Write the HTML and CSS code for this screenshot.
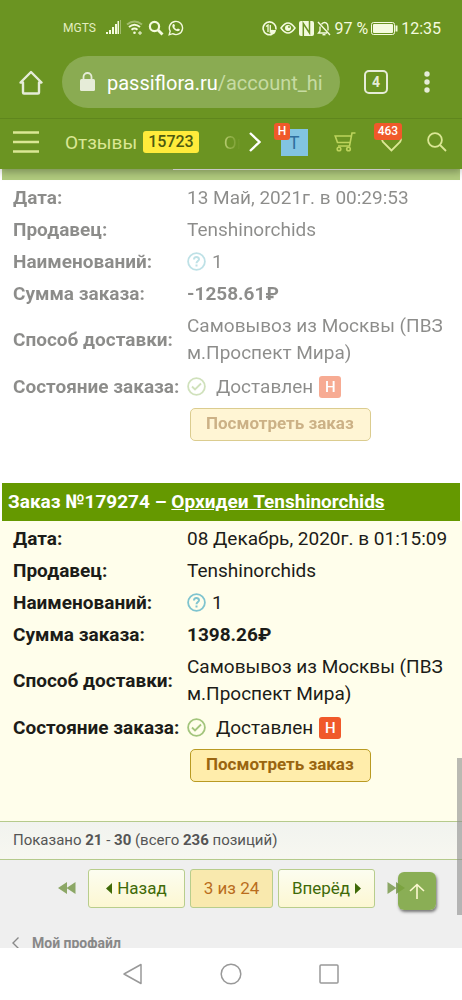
FILE: index.html
```html
<!DOCTYPE html>
<html lang="ru">
<head>
<meta charset="utf-8">
<meta name="viewport" content="width=device-width, initial-scale=1">
<title>История заказов</title>
<link rel="stylesheet" href="styles.css">
</head>
<body>
<div class="screen">
  <header class="chrome">
    <div class="status">
      <div class="status-group">
        <span class="carrier">MGTS</span>
        <svg width="16" height="16" viewBox="0 0 16 16" fill="currentColor"><path d="M0 12h2v2H0zM3 10h2v4H3zM6 7h2v7H6zM9 4h2v10H9zM11.500 1h1.500v13h-1.500z"/><path d="M14 0h1v14h-1z" opacity=".4"/></svg>
        <svg width="18" height="16" viewBox="0 0 18 16" fill="none" stroke="currentColor" stroke-width="2"><path d="M1 4.500Q8.500-1.500 16 4.500" opacity=".4"/><path d="M3 7Q8.500 2.500 14 7M5.500 9.700Q8.500 7.300 11.500 9.700"/><circle cx="8.500" cy="12.700" r="1.300" fill="currentColor" stroke="none"/><path d="M12 13h4M14 11v4" stroke-width="1"/></svg>
        <svg width="16" height="16" viewBox="0 0 16 16" fill="none" stroke="currentColor" stroke-width="2.200"><circle cx="6.500" cy="6.500" r="4.600"/><path d="M10 10l4.500 4.500" stroke-width="2.800"/></svg>
        <svg width="16" height="16" viewBox="0 0 16 16" fill="none" stroke="currentColor" stroke-width="1.400"><path d="M1.200 14.800l1-3.600a6.600 6.600 0 1 1 2.500 2.500z"/><path d="M5 4.300c1.300-.8 1.600.6 2 1.600l-.7 1.100c.6 1.200 1.400 1.900 2.600 2.300l1-.9 1.900.9c.3 1.500-1.600 2.300-3 1.800C6.200 10 4.700 8.300 4.300 6.200c0-.8.200-1.400.7-1.900z" fill="currentColor" stroke="none"/></svg>
      </div>
      <div class="status-group">
        <svg width="15" height="15" viewBox="0 0 15 15" fill="none" stroke="currentColor" stroke-width="1.600"><path d="M10 13.200A6.400 6.400 0 1 1 13.800 8.500"/><path d="M4 5.500L6 4v7M8.300 4v7l2.200-2" stroke-width="1.300"/><path d="M8.500 14.500V9H14q0 4-5.500 5.500z" fill="currentColor" stroke="none"/></svg>
        <svg width="16" height="14" viewBox="0 0 16 14" fill="none" stroke="currentColor" stroke-width="1.500"><path d="M1 7Q8-3 15 7Q8 17 1 7z"/><circle cx="8" cy="7" r="3" fill="currentColor" stroke="none"/><circle cx="9" cy="6" r=".9" fill="#6b9422" stroke="none"/></svg>
        <svg width="15" height="15" viewBox="0 0 15 15"><path d="M2 0h11a2 2 0 0 1 2 2v11a2 2 0 0 1-2 2H2a2 2 0 0 1-2-2V2a2 2 0 0 1 2-2z" fill="currentColor"/><path d="M4.300 15V2.500l6.200 9.500V0" fill="none" stroke="#6b9422" stroke-width="1.500"/></svg>
        <svg width="14" height="15" viewBox="0 0 14 15" fill="none" stroke="currentColor" stroke-width="1.400"><path d="M1 1l12 13M4.500 3.200C8-.5 11 2.500 11 6v3.500M3 5.500V10L1.500 12H10"/><path d="M5.500 13.700h3"/></svg>
        <span>97 %</span>
        <svg width="27" height="13" viewBox="0 0 27 13" fill="none" stroke="currentColor"><rect x=".5" y=".5" width="23" height="12" rx="2"/><rect x="2" y="2" width="20" height="9" rx="1" fill="currentColor" stroke="none"/><path d="M25.500 3.500v6" stroke-width="2"/></svg>
        <time>12:35</time>
      </div>
    </div>
    <div class="browser-bar">
      <button class="icon-btn home" aria-label="Домой"><svg width="24" height="25" viewBox="0 0 24 25" fill="none" stroke="currentColor" stroke-width="2.400" stroke-linejoin="round" stroke-linecap="round"><path d="M1.500 12.500L12 2l10.500 10.500H20V22.500a1 1 0 0 1-1 1H5a1 1 0 0 1-1-1V12.500z"/></svg></button>
      <div class="url">
        <svg width="15" height="20" viewBox="0 0 15 20"><rect x="0" y="7" width="15" height="12" rx="1.500" fill="currentColor"/><path d="M3.500 8V5a4 4 0 0 1 8 0v3" fill="none" stroke="currentColor" stroke-width="1.800"/></svg>
        <span class="url-text">passiflora.ru<span class="url-path">/account_hi</span></span>
      </div>
      <button class="tabs" aria-label="Вкладки">4</button>
      <button class="icon-btn" aria-label="Меню"><svg width="6" height="22" viewBox="0 0 6 22" fill="currentColor"><circle cx="3" cy="3" r="2.700"/><circle cx="3" cy="11" r="2.700"/><circle cx="3" cy="19" r="2.700"/></svg></button>
    </div>
    <nav class="site-nav">
      <button class="icon-btn" aria-label="Меню сайта"><svg width="26" height="22" viewBox="0 0 26 22" stroke="currentColor" stroke-width="2.500"><path d="M0 1.500h26M0 11h26M0 20.500h26"/></svg></button>
      <a class="reviews" href="#">Отзывы <span class="count">15723</span></a>
      <a class="cut" href="#">Оп</a>
      <button class="icon-btn next" aria-label="Дальше"><svg width="12" height="20" viewBox="0 0 12 20" fill="none" stroke="currentColor" stroke-width="2.400"><path d="M1 1l9.500 9L1 19"/></svg></button>
      <a class="avatar" href="#">T<span class="badge">Н</span></a>
      <a class="cart" href="#" aria-label="Корзина"><svg width="22" height="20" viewBox="0 0 22 20" fill="none" stroke="currentColor" stroke-width="1.600"><path d="M21.500 1h-3.500L15.500 14H4M17.500 4H1.200L3.500 10.500H16"/><circle cx="5" cy="17" r="1.800"/><circle cx="14.500" cy="17" r="1.800"/></svg></a>
      <a class="heart" href="#" aria-label="Избранное"><svg width="21" height="19" viewBox="0 0 21 19" fill="none" stroke="currentColor" stroke-width="1.800"><path d="M10.500 17.500L2 9C-1 4 5-1.500 10.500 4 16-1.500 22 4 19 9z"/></svg><span class="badge">463</span></a>
      <button class="icon-btn find" aria-label="Поиск"><svg width="20" height="20" viewBox="0 0 20 20" fill="none" stroke="currentColor" stroke-width="1.800"><circle cx="8" cy="8" r="6.900"/><path d="M13 13l6 6"/></svg></button>
    </nav>
  </header>

  <main>
    <section class="order past">
      <div class="title-edge"><span></span></div>
      <dl class="fields">
        <dt>Дата:</dt><dd>13 Май, 2021г. в 00:29:53</dd>
        <dt>Продавец:</dt><dd>Tenshinorchids</dd>
        <dt>Наименований:</dt><dd><svg class="ring help" width="19" height="19" viewBox="0 0 19 19" fill="none" stroke="currentColor" stroke-width="1.800"><circle cx="9.500" cy="9.500" r="8.400"/><path d="M7 7.500C7 4.300 12 4.300 12 7.300c0 1.700-2.500 1.900-2.500 4M9.500 12.600v2" stroke-width="2"/></svg>1</dd>
        <dt>Сумма заказа:</dt><dd><b>-1258.61₽</b></dd>
        <dt>Способ доставки:</dt><dd>Самовывоз из Москвы (ПВЗ м.Проспект Мира)</dd>
        <dt class="state">Состояние заказа:</dt><dd class="state"><svg class="ring done" width="19" height="19" viewBox="0 0 19 19" fill="none" stroke="currentColor" stroke-width="1.800"><circle cx="9.500" cy="9.500" r="8.400"/><path d="M5 9.500l3 3 6-6"/></svg>Доставлен<span class="mark">Н</span></dd>
      </dl>
      <button class="view">Посмотреть заказ</button>
    </section>

    <section class="order current">
      <h2>Заказ №179274 – <a href="#">Орхидеи Tenshinorchids</a></h2>
      <dl class="fields">
        <dt>Дата:</dt><dd>08 Декабрь, 2020г. в 01:15:09</dd>
        <dt>Продавец:</dt><dd>Tenshinorchids</dd>
        <dt>Наименований:</dt><dd><svg class="ring help" width="19" height="19" viewBox="0 0 19 19" fill="none" stroke="currentColor" stroke-width="1.800"><circle cx="9.500" cy="9.500" r="8.400"/><path d="M7 7.500C7 4.300 12 4.300 12 7.300c0 1.700-2.500 1.900-2.500 4M9.500 12.600v2" stroke-width="2"/></svg>1</dd>
        <dt>Сумма заказа:</dt><dd><b>1398.26₽</b></dd>
        <dt>Способ доставки:</dt><dd>Самовывоз из Москвы (ПВЗ м.Проспект Мира)</dd>
        <dt class="state">Состояние заказа:</dt><dd class="state"><svg class="ring done" width="19" height="19" viewBox="0 0 19 19" fill="none" stroke="currentColor" stroke-width="1.800"><circle cx="9.500" cy="9.500" r="8.400"/><path d="M5 9.500l3 3 6-6"/></svg>Доставлен<span class="mark">Н</span></dd>
      </dl>
      <button class="view">Посмотреть заказ</button>
    </section>

    <p class="summary">Показано <b>21</b> - <b>30</b> (всего <b>236</b> позиций)</p>
    <nav class="pager">
      <a class="jump first" href="#" aria-label="Первая"><svg width="18" height="14" viewBox="0 0 18 14" fill="currentColor"><path d="M9 1v12L0 7zM17.500 1v12L8.500 7z"/></svg></a>
      <a class="page" href="#"><svg width="7" height="11" viewBox="0 0 7 11" fill="currentColor"><path d="M6 0v11L0 5.500z"/></svg>Назад</a>
      <span class="page now">3 из 24</span>
      <a class="page" href="#">Вперёд<svg width="7" height="11" viewBox="0 0 7 11" fill="currentColor"><path d="M1 0v11l6-5.500z"/></svg></a>
      <a class="jump last" href="#" aria-label="Последняя"><svg width="18" height="14" viewBox="0 0 18 14" fill="currentColor"><path d="M.5 1v12l9-6zM9 1v12l9-6z"/></svg></a>
      <button class="to-top" aria-label="Наверх"><svg width="16" height="16" viewBox="0 0 16 16" fill="none" stroke="currentColor" stroke-width="1.600"><path d="M8 16V1.500M1 8l7-6.500L15 8"/></svg></button>
    </nav>
    <a class="back" href="#"><svg width="7" height="12" viewBox="0 0 7 12" fill="none" stroke="currentColor" stroke-width="1.400"><path d="M6.500.5L1 6l5.500 5.500"/></svg>Мой профайл</a>
    <div class="scrollbar"></div>
  </main>

  <footer class="system">
    <button class="icon-btn" aria-label="Назад"><svg width="22" height="22" viewBox="0 0 22 22" fill="none" stroke="currentColor" stroke-width="1.500" stroke-linejoin="round"><path d="M19 1.500v19L2 11z"/></svg></button>
    <button class="icon-btn" aria-label="Главный экран"><svg width="22" height="22" viewBox="0 0 22 22" fill="none" stroke="currentColor" stroke-width="1.500"><circle cx="11" cy="11" r="9.800"/></svg></button>
    <button class="icon-btn" aria-label="Последние приложения"><svg width="22" height="22" viewBox="0 0 22 22" fill="none" stroke="currentColor" stroke-width="1.500"><rect x="2" y="2" width="18" height="18" rx="1"/></svg></button>
  </footer>
</div>
</body>
</html>
```
FILE: styles.css
```css
* { box-sizing: border-box; }
body {
  margin: 0;
  font-family: Roboto, "Noto Sans", sans-serif;
  color: #1c1c18;
  background: #fff;
}
button { font: inherit; }
a { color: inherit; text-decoration: none; }
svg { display: block; flex: none; }
.screen { display: flex; flex-direction: column; height: 100vh; overflow: hidden; }
.icon-btn { display: flex; padding: 0; border: 0; background: none; color: inherit; }

.chrome { flex: none; background: #6b9422; position: relative; z-index: 2; box-shadow: 0 3px 8px rgba(0, 0, 0, .3); }
.status {
  height: 56px;
  padding: 0 21px 0 63px;
  display: flex;
  justify-content: space-between;
  align-items: center;
  color: #f4fade;
}
.status-group { display: flex; align-items: center; gap: 4px; font-size: 16px; }
.status-group + .status-group { gap: 3px; }
.carrier { font-size: 12px; color: #e3eec0; margin-right: 6px; }

.browser-bar { display: flex; align-items: center; height: 52px; padding: 0 33px 0 19px; color: #e6ecd8; }
.home { margin-right: 19px; }
.url {
  flex: 1;
  display: flex;
  align-items: center;
  gap: 12px;
  height: 52px;
  padding: 0 10px 0 18px;
  border-radius: 26px;
  background: #8aab52;
  overflow: hidden;
}
.url-text { font-size: 20px; line-height: 28px; padding-top: 2px; color: #fff; white-space: nowrap; }
.url-path { color: #c6dba2; }
.tabs {
  width: 24px;
  height: 24px;
  margin: 0 36px 0 24px;
  padding: 0;
  border: 2px solid #e6ecd8;
  border-radius: 5px;
  background: none;
  color: #e6ecd8;
  font-size: 14px;
  font-weight: 700;
  line-height: 20px;
}
.tabs + .icon-btn { margin-right: -1px; }

.site-nav {
  display: flex;
  align-items: center;
  height: 51px;
  margin-top: 10px;
  padding: 0 15px 4px 13px;
  border-top: 1px solid #5f861d;
  color: #dbe795;
}
.reviews { display: flex; align-items: center; gap: 6px; margin-left: 26px; font-size: 19px; }
.count { padding: 0 5px; border-radius: 3px; background: #ffeb3b; color: #4c5a10; font-size: 16px; font-weight: 500; line-height: 22px; }
.cut {
  width: 16px;
  margin-left: 25px;
  overflow: hidden;
  white-space: nowrap;
  font-size: 19px;
  color: transparent;
  background: linear-gradient(90deg, #b9cd72, #6b9422);
  background-clip: text;
}
.next { margin-left: 9px; color: #fff; }
.avatar {
  position: relative;
  width: 27px;
  height: 27px;
  margin-left: 20px;
  background: #82c4e2;
  color: #2f6f9f;
  font-size: 18px;
  line-height: 27px;
  text-align: center;
}
.badge {
  position: absolute;
  top: -6px;
  left: -7px;
  padding: 0 4px;
  border-radius: 3px;
  background: #f0592a;
  color: #fff;
  font-size: 12px;
  font-weight: 500;
  line-height: 17px;
}
.cart { margin-left: 26px; color: #bdd35c; }
.heart { position: relative; margin-left: 25px; }
.heart .badge { top: -10px; left: -7px; }
.find { margin-left: auto; }

main { flex: 1; position: relative; min-height: 0; overflow: hidden; background: #efefef; }
.order { padding: 0 2px; font-size: 19px; line-height: 27px; }
.past { background: #fff; padding-bottom: 42px; }
.past > * { opacity: .5; }
.title-edge { height: 11px; margin-bottom: 1px; background: #659900; }
.title-edge span { display: block; width: 217px; height: 1px; margin-left: 171px; background: #fff; }
.current { background: linear-gradient(#fff 38px, #fffeeb 38px); padding-bottom: 39px; }
h2 { margin: 0 0 1px; padding: 0 6px; background: #659900; color: #fff; font-size: 19px; line-height: 38px; font-weight: 700; }
h2 a { text-decoration: underline; }
.fields { display: grid; grid-template-columns: 169px 1fr; column-gap: 5px; margin: 0; padding: 0 0 0 11px; align-items: center; }
dt { font-weight: 700; padding: 3px 0 2px; white-space: nowrap; }
dd { margin: 0; padding: 3px 0 2px; }
dt.state, dd.state { padding: 5px 0 6px; }
.ring { display: inline-block; vertical-align: -3px; margin-right: 6px; }
.help { color: #7fc4cf; }
.done { color: #a3c57c; margin-right: 10px; }
.mark { display: inline-block; margin-left: 6px; width: 22px; border-radius: 3px; background: #f0592a; color: #fff; font-size: 15px; font-weight: 500; line-height: 22px; text-align: center; vertical-align: 1px; }
.view {
  display: block;
  height: 33px;
  margin: 2px 0 0 188px;
  padding: 0 16px 3px 15px;
  border: 1px solid #b99a22;
  border-radius: 5px;
  background: #ffedab;
  color: #9a6510;
  font-size: 17px;
  font-weight: 700;
}

.summary {
  margin: 0;
  padding: 0 13px;
  border: solid #b5ca8c;
  border-width: 1px 0;
  background: linear-gradient(#f1f3ef, #f7f7f0);
  color: #555;
  font-size: 15px;
  line-height: 37px;
}
.pager { position: relative; display: flex; align-items: center; gap: 5px; height: 56px; padding-left: 58px; font-size: 17px; }
.jump { color: #8ca766; }
.first { margin-right: 7px; }
.last { margin-left: 7px; }
.page {
  display: flex;
  align-items: center;
  justify-content: center;
  gap: 4px;
  width: 97px;
  height: 39px;
  border: 1px solid #b8cd8c;
  border-radius: 3px;
  background: linear-gradient(#fcfdf0, #fcf7d2);
  color: #3f6a08;
}
.now { width: 83px; background: #f9e9ae; color: #b96d1d; }
.to-top {
  position: absolute;
  top: 12px;
  right: 26px;
  display: flex;
  align-items: center;
  justify-content: center;
  width: 38px;
  height: 38px;
  padding: 0;
  border: 0;
  border-radius: 6px;
  background: rgba(120, 162, 58, .85);
  color: #fcf8d0;
  box-shadow: 1px 2px 3px rgba(0, 0, 0, .5);
}
.back { display: flex; align-items: center; gap: 13px; margin-top: 18px; padding-left: 12px; color: #888; font-size: 14px; font-weight: 700; line-height: 18px; }
.scrollbar { position: absolute; right: 0; bottom: 33px; width: 5px; height: 157px; background: rgba(140, 140, 140, .6); }

.system {
  flex: none;
  display: flex;
  justify-content: center;
  align-items: center;
  gap: 76px;
  height: 52px;
  background: #fff;
  color: #999;
}
```
